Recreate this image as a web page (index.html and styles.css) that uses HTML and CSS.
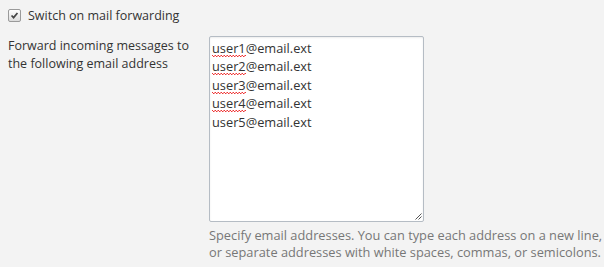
FILE: index.html
```html
<!DOCTYPE html>
<html>
<head>
<meta charset="utf-8">
<link rel="stylesheet" href="styles.css">
</head>
<body>
<div class="page">
  <label class="check-row">
    <span class="checkbox"><svg viewBox="0 0 13 13" width="13" height="13"><path d="M3 6.5 L5.4 9 L10 3.5" fill="none" stroke="#444" stroke-width="2"/></svg></span>
    <span class="check-label">Switch on mail forwarding</span>
  </label>
  <div class="field-row">
    <div class="field-label">Forward incoming messages to the following email address</div>
    <div class="field-control">
      <div class="textarea" role="textbox" aria-multiline="true">
        <div><span class="sp">user1</span>@email.ext</div>
        <div><span class="sp">user2</span>@email.ext</div>
        <div><span class="sp">user3</span>@email.ext</div>
        <div><span class="sp">user4</span>@email.ext</div>
        <div>user5@email.ext</div>
        <svg class="grip" viewBox="0 0 8 8" width="8" height="8"><path d="M7.5 1.5 L1.5 7.5 M7.5 4.5 L4.5 7.5" stroke="#555" stroke-width="1"/></svg>
      </div>
      <div class="help">Specify email addresses. You can type each address on a new line, or separate addresses with white spaces, commas, or semicolons.</div>
    </div>
  </div>
</div>
</body>
</html>
```
FILE: styles.css
```css
html, body {
  margin: 0;
  padding: 0;
  background: #f3f3f3;
}
body {
  font-family: "Open Sans", "DejaVu Sans", sans-serif;
  font-size: 12.5px;
  color: #333;
}
.page {
  padding: 8px 0 0 8px;
}
.check-row {
  display: flex;
  align-items: center;
  gap: 7px;
  height: 15px;
}
.checkbox {
  width: 11px;
  height: 11px;
  border: 1px solid #9a9a9a;
  border-radius: 2px;
  background: linear-gradient(#fdfdfd, #dcdcdc);
  display: flex;
  align-items: center;
  justify-content: center;
  overflow: hidden;
}
.check-label {
  line-height: 15px;
}
.field-row {
  display: grid;
  grid-template-columns: 201px 215px;
  margin-top: 13px;
}
.field-label {
  padding-top: 1px;
  padding-right: 10px;
  line-height: 18px;
}
.textarea {
  position: relative;
  box-sizing: border-box;
  width: 215px;
  height: 186px;
  background: #fff;
  border: 1px solid #b5bcc4;
  border-radius: 2px;
  box-shadow: inset 0 1px 2px rgba(0,0,0,0.08);
  padding: 2px 2px;
  font-size: 12.8px;
  line-height: 18.4px;
  color: #333;
}
.sp {
  position: relative;
}
.sp::after {
  content: "";
  position: absolute;
  left: 0;
  right: 0;
  bottom: 0;
  height: 2px;
  background:
    linear-gradient(45deg, transparent 40%, #e33 40% 60%, transparent 60%) 0 0 / 3px 2px repeat-x,
    linear-gradient(-45deg, transparent 40%, #e33 40% 60%, transparent 60%) 1.5px 0 / 3px 2px repeat-x;
}
.grip {
  position: absolute;
  right: 1px;
  bottom: 1px;
}
.help {
  margin-top: 5px;
  width: 395px;
  font-size: 12.8px;
  color: #777;
  line-height: 17px;
}
```
